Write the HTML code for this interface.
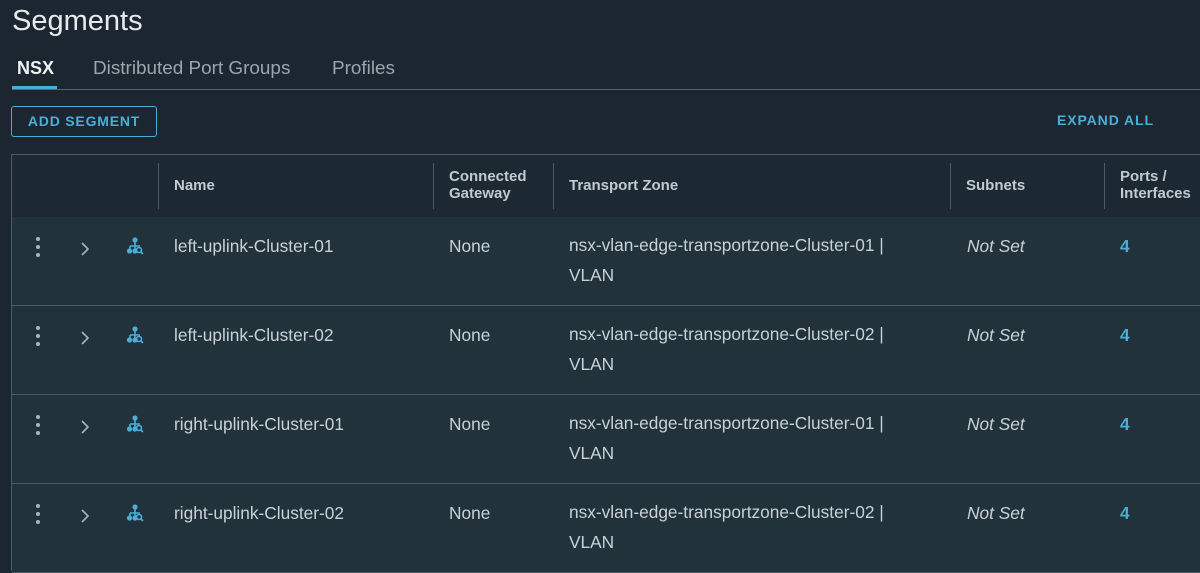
<!DOCTYPE html><html><head><style>
body{margin:0;width:1200px;height:571px;overflow:hidden;background:#1b2630;font-family:"Liberation Sans",sans-serif;color:#c9d1d6;position:relative}
.a{position:absolute;white-space:nowrap}
.h{font-weight:bold;font-size:15px;color:#c0cad0}
.r{position:absolute;left:12px;width:1188px;height:88px;background:#21323b;border-bottom:1px solid #4b5b64}
.r span{position:absolute;font-size:17.3px;color:#c9d1d6}
.dots{left:24px;top:20px;width:4px}
.dots i{display:block;width:4px;height:4px;background:#aab4ba;border-radius:50%;margin-bottom:4px}
</style></head><body>
<div class="a" style="left:12px;top:5px;font-size:29px;color:#e6eaec">Segments</div>
<div class="a" style="left:17px;top:58px;font-size:18px;color:#f0f3f4;font-weight:bold">NSX</div>
<div class="a" style="left:93px;top:58px;font-size:18.9px;color:#9aa6ad">Distributed Port Groups</div>
<div class="a" style="left:332px;top:58px;font-size:18.9px;color:#9aa6ad">Profiles</div>
<div class="a" style="left:12px;top:89px;width:1188px;height:1px;background:#56646c"></div>
<div class="a" style="left:12px;top:86px;width:45px;height:3px;background:#49afd9"></div>
<div class="a" style="left:11px;top:106px;width:144px;height:29px;border:1px solid #49afd9;border-radius:3px;color:#49afd9;font-size:14px;font-weight:bold;letter-spacing:.8px;text-align:center;line-height:29px">ADD SEGMENT</div>
<div class="a" style="left:1057px;top:112px;color:#49afd9;font-size:14px;font-weight:bold;letter-spacing:.9px">EXPAND ALL</div>
<div class="a" style="left:11px;top:154px;width:1189px;height:62px;border:1px solid #4b5b64;border-right:none;background:#1d2932"></div>
<div class="a" style="left:158px;top:163px;width:1px;height:46px;background:#4b5b64"></div>
<div class="a" style="left:433px;top:163px;width:1px;height:46px;background:#4b5b64"></div>
<div class="a" style="left:553px;top:163px;width:1px;height:46px;background:#4b5b64"></div>
<div class="a" style="left:950px;top:163px;width:1px;height:46px;background:#4b5b64"></div>
<div class="a" style="left:1104px;top:163px;width:1px;height:46px;background:#4b5b64"></div>
<div class="a h" style="left:174px;top:177px">Name</div>
<div class="a h" style="left:449px;top:168px;line-height:17px">Connected<br>Gateway</div>
<div class="a h" style="left:569px;top:177px">Transport Zone</div>
<div class="a h" style="left:966px;top:177px">Subnets</div>
<div class="a h" style="left:1120px;top:168px;line-height:17px">Ports /<br>Interfaces</div>
<div class="a" style="left:11px;top:217px;width:1px;height:354px;background:#4b5b64"></div>
<div id="rows"></div>
<script>
var d=[["left-uplink-Cluster-01","01"],["left-uplink-Cluster-02","02"],["right-uplink-Cluster-01","01"],["right-uplink-Cluster-02","02"]];
var tops=[217,306,395,484],h="";
d.forEach(function(x,i){h+='<div class="r" style="top:'+tops[i]+'px"><span class="dots" style="top:20px"><i></i><i></i><i></i></span><svg style="position:absolute;left:67px;top:24px" width="12" height="16" viewBox="0 0 12 16" fill="none" stroke="#aab4ba" stroke-width="1.6"><path d="M3 2l6 6-6 6"/></svg><svg style="position:absolute;left:114px;top:20px" width="18" height="18" viewBox="0 0 18 18" fill="none" stroke="#49afd9" stroke-width="1.6"><circle cx="9" cy="3" r="1.8" fill="#49afd9"/><path d="M9 5v4M4 9h10M4 9v4M9 9v4"/><circle cx="3.5" cy="14" r="1.8" fill="#49afd9"/><circle cx="9" cy="14" r="1.8" fill="#49afd9"/><circle cx="13" cy="13" r="2.5"/><path d="M15 15l2 2"/></svg><span style="left:162px;top:19px">'+x[0]+'</span><span style="left:437px;top:19px">None</span><span style="left:557px;top:13px;line-height:30px">nsx-vlan-edge-transportzone-Cluster-'+x[1]+' |<br>VLAN</span><span style="left:955px;top:19px;font-style:italic">Not Set</span><span style="left:1108px;top:19px;color:#49afd9;font-weight:bold">4</span></div>'});
document.getElementById("rows").innerHTML=h;
</script>
</body></html>
